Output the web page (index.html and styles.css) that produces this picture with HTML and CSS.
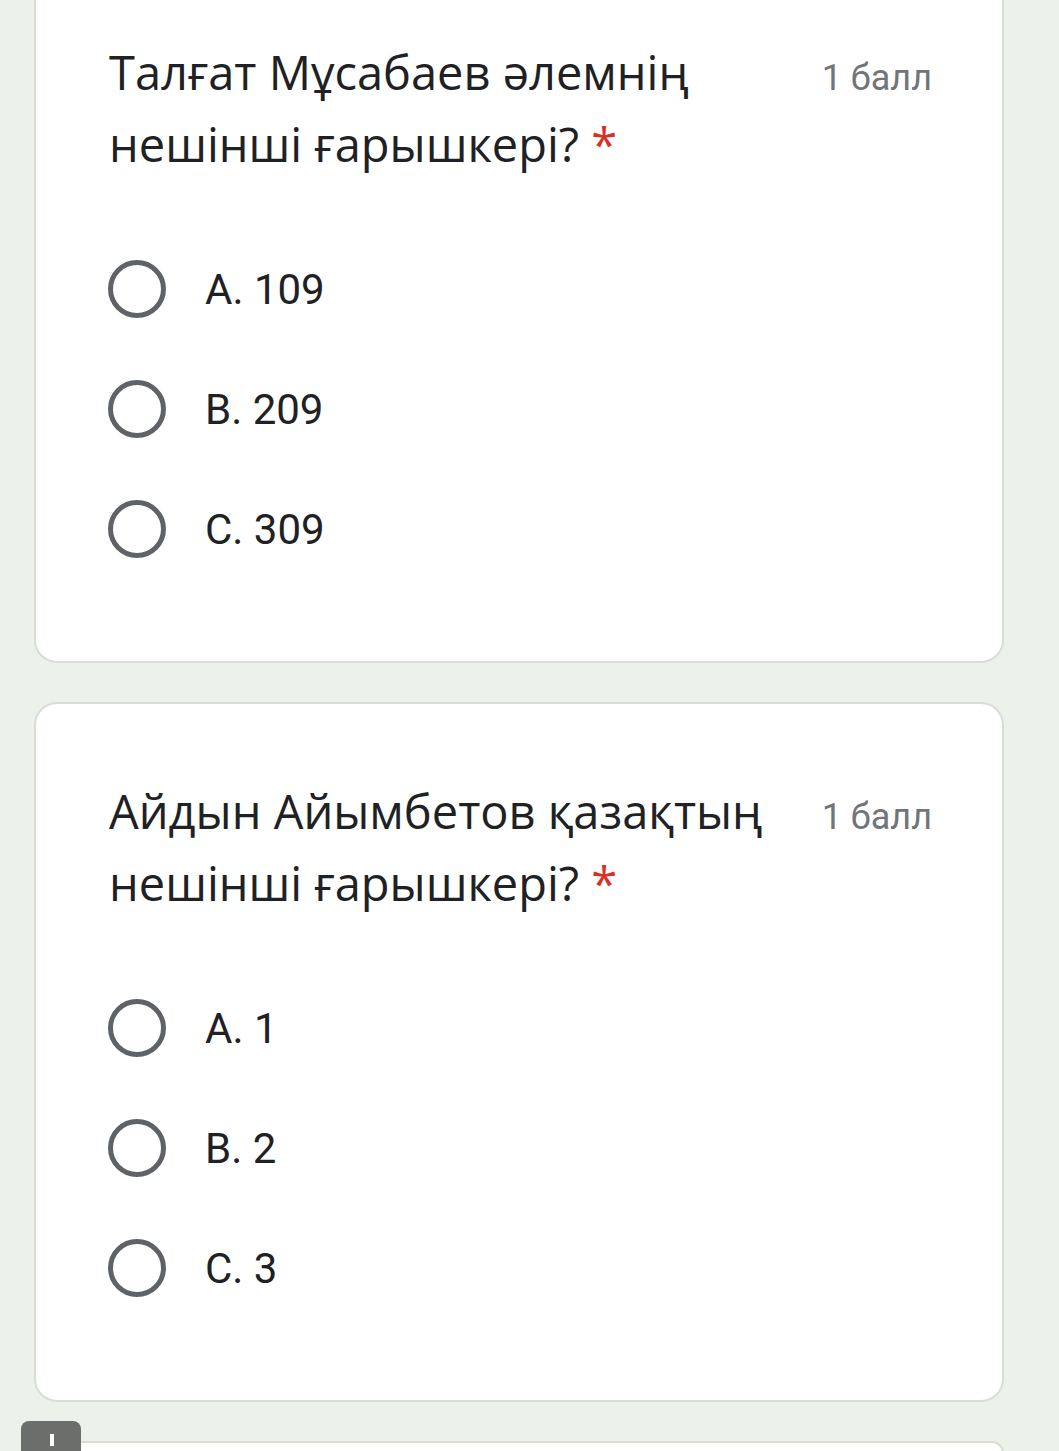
FILE: index.html
```html
<!DOCTYPE html>
<html lang="kk">
<head>
<meta charset="utf-8">
<title>Form</title>
<link rel="stylesheet" href="styles.css">
</head>
<body>
<main class="page">
  <section class="card">
    <div class="head">
      <h2 class="title">Талғат Мұсабаев әлемнің<br>нешінші ғарышкері? <span class="req">*</span></h2>
      <span class="points">1 балл</span>
    </div>
    <div class="options">
      <label class="opt"><span class="radio"></span><span class="opt-text">A. 109</span></label>
      <label class="opt"><span class="radio"></span><span class="opt-text">B. 209</span></label>
      <label class="opt"><span class="radio"></span><span class="opt-text">C. 309</span></label>
    </div>
  </section>
  <section class="card">
    <div class="head">
      <h2 class="title">Айдын Айымбетов қазақтың<br>нешінші ғарышкері? <span class="req">*</span></h2>
      <span class="points">1 балл</span>
    </div>
    <div class="options">
      <label class="opt"><span class="radio"></span><span class="opt-text">A. 1</span></label>
      <label class="opt"><span class="radio"></span><span class="opt-text">B. 2</span></label>
      <label class="opt"><span class="radio"></span><span class="opt-text">C. 3</span></label>
    </div>
  </section>
  <section class="card card-stub"></section>
</main>
<div class="fab"><span class="fab-mark"></span></div>
</body>
</html>
```
FILE: styles.css
```css
html, body {
  margin: 0;
  padding: 0;
  background: #ecf1e9;
  height: 1451px;
  overflow: hidden;
}
.page {
  margin-top: -37px;
  padding-left: 34px;
  display: flex;
  flex-direction: column;
  gap: 39px;
}
.card {
  box-sizing: border-box;
  width: 970px;
  min-height: 700px;
  background: #ffffff;
  border: 2px solid #dadcd8;
  border-radius: 23px;
  padding: 71px 73px 71px 73px;
}
.card-stub {
  min-height: 0;
  height: 12px;
  padding: 0;
  border-bottom: none;
  border-radius: 23px 23px 0 0;
}
.head {
  display: flex;
  align-items: baseline;
  justify-content: space-between;
}
.title {
  margin: 0;
  font-family: "Open Sans", "Noto Sans", sans-serif;
  font-weight: 400;
  font-size: 47px;
  line-height: 72px;
  color: #202124;
  letter-spacing: 0;
}
.req {
  color: #d93025;
}
.points {
  font-family: Roboto, "Noto Sans", sans-serif;
  font-size: 36px;
  color: #70757a;
  margin-right: -3px;
}
.options {
  margin-top: 49px;
  display: flex;
  flex-direction: column;
}
.opt {
  height: 120px;
  display: flex;
  align-items: center;
  gap: 39px;
}
.radio {
  box-sizing: border-box;
  width: 58px;
  height: 58px;
  margin-left: -1px;
  border: 5.5px solid #5f6368;
  border-radius: 50%;
  flex: none;
}
.opt-text {
  font-family: Roboto, "Noto Sans", sans-serif;
  font-size: 42px;
  color: #202124;
}
.fab {
  position: fixed;
  left: 21px;
  top: 1421px;
  width: 60px;
  height: 30px;
  background: #6c6e6b;
  border-radius: 8px 8px 0 0;
}
.fab-mark {
  position: absolute;
  left: 29px;
  top: 13px;
  width: 4px;
  height: 12px;
  background: #ffffff;
}
```
